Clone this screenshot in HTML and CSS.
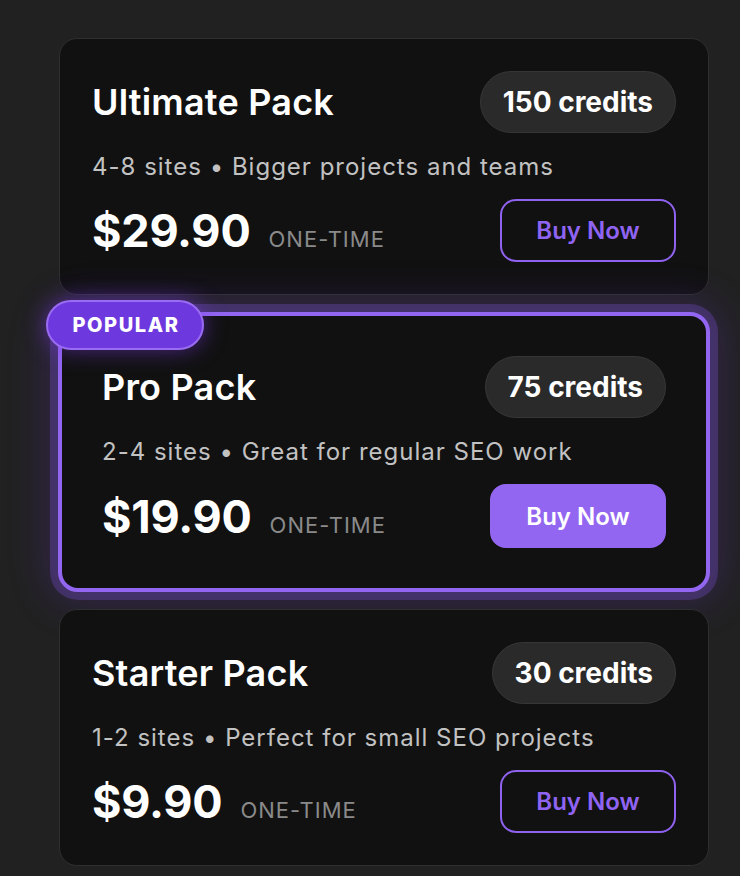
FILE: index.html
```html
<!DOCTYPE html>
<html lang="en">
<head>
<meta charset="utf-8">
<title>Credit Packs</title>
<link rel="stylesheet" href="styles.css">
</head>
<body>
<main class="packs">
  <section class="card">
    <div class="card-head">
      <h2 class="title">Ultimate Pack</h2>
      <span class="credits">150 credits</span>
    </div>
    <p class="desc">4-8 sites • Bigger projects and teams</p>
    <div class="card-foot">
      <div class="price"><span class="amount">$29.90</span><span class="term">ONE-TIME</span></div>
      <button class="buy">Buy Now</button>
    </div>
  </section>

  <section class="card popular">
    <span class="badge">POPULAR</span>
    <div class="card-head">
      <h2 class="title">Pro Pack</h2>
      <span class="credits">75 credits</span>
    </div>
    <p class="desc">2-4 sites • Great for regular SEO work</p>
    <div class="card-foot">
      <div class="price"><span class="amount">$19.90</span><span class="term">ONE-TIME</span></div>
      <button class="buy buy-filled">Buy Now</button>
    </div>
  </section>

  <section class="card">
    <div class="card-head">
      <h2 class="title">Starter Pack</h2>
      <span class="credits">30 credits</span>
    </div>
    <p class="desc">1-2 sites • Perfect for small SEO projects</p>
    <div class="card-foot">
      <div class="price"><span class="amount">$9.90</span><span class="term">ONE-TIME</span></div>
      <button class="buy">Buy Now</button>
    </div>
  </section>
</main>
</body>
</html>
```

FILE: styles.css
```css
* { box-sizing: border-box; }

html, body {
  margin: 0;
  padding: 0;
  background: #212121;
  font-family: Inter, "Noto Sans", "Liberation Sans", sans-serif;
  color: #fff;
}

.packs {
  width: 650px;
  margin-left: 59px;
  padding-top: 38px;
  display: flex;
  flex-direction: column;
  gap: 17px;
}

.card {
  position: relative;
  background: #111111;
  border: 1px solid #2f2f2f;
  border-radius: 18px;
  padding: 32px;
}

.card.popular {
  margin: 0 -1px;
  border: 4px solid #9366f1;
  border-radius: 20px;
  padding: 40px;
  box-shadow: 0 0 0 8px rgba(139, 92, 246, 0.25), 0 0 40px 10px rgba(124, 58, 237, 0.22);
}

.badge {
  position: absolute;
  top: -16px;
  left: -16px;
  height: 50px;
  width: 158px;
  display: flex;
  align-items: center;
  justify-content: center;
  padding-left: 2px;
  background: #6d38dd;
  border: 2px solid #9a6cf3;
  border-radius: 25px;
  font-size: 20px;
  font-weight: 800;
  letter-spacing: 1.6px;
  color: #fff;
  box-shadow: 0 0 22px rgba(124, 58, 237, 0.55);
}

.card-head {
  display: flex;
  align-items: center;
  justify-content: space-between;
}

.title {
  margin: 0;
  font-size: 36px;
  font-weight: 600;
  letter-spacing: 0.2px;
}

.credits {
  height: 62px;
  display: flex;
  align-items: center;
  padding: 0 22px;
  background: #2a2a2a;
  border: 1px solid #363636;
  border-radius: 31px;
  font-size: 28px;
  font-weight: 700;
}

.desc {
  margin: 16px 0 14px;
  font-size: 24px;
  line-height: 36px;
  letter-spacing: 1px;
  color: #c2c2c2;
}

.card-foot {
  display: flex;
  align-items: center;
  justify-content: space-between;
}

.price {
  display: flex;
  align-items: baseline;
  gap: 18px;
}

.amount {
  font-size: 45px;
  font-weight: 700;
  letter-spacing: -0.2px;
}

.term {
  font-size: 22px;
  letter-spacing: 1px;
  color: #8a8a8a;
}

.buy {
  height: 63px;
  width: 176px;
  border: 2px solid #8f62f0;
  border-radius: 16px;
  background: transparent;
  color: #9064f2;
  font-family: inherit;
  font-size: 24px;
  font-weight: 600;
}

.buy-filled {
  height: 64px;
  border-color: #9366f1;
  background: #9366f1;
  color: #fff;
}
```
